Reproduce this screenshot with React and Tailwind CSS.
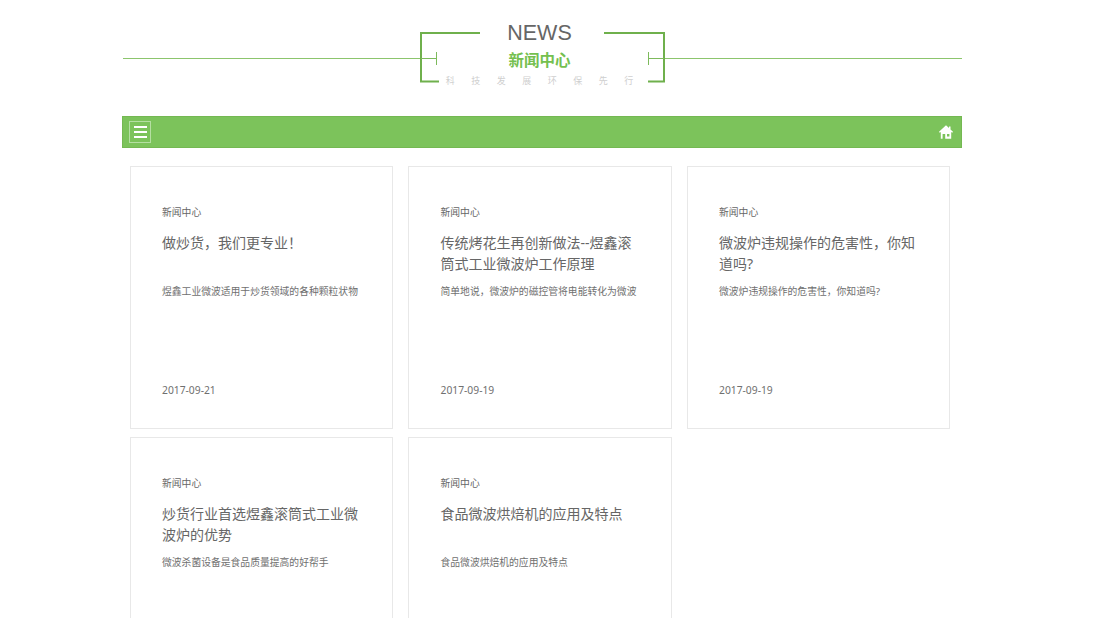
const cards = [
  { t: "做炒货，我们更专业！", d: "煜鑫工业微波适用于炒货领域的各种颗粒状物", date: "2017-09-21" },
  { t: "传统烤花生再创新做法--煜鑫滚筒式工业微波炉工作原理", d: "简单地说，微波炉的磁控管将电能转化为微波", date: "2017-09-19" },
  { t: "微波炉违规操作的危害性，你知道吗?", d: "微波炉违规操作的危害性，你知道吗?", date: "2017-09-19" },
  { t: "炒货行业首选煜鑫滚筒式工业微波炉的优势", d: "微波杀菌设备是食品质量提高的好帮手", date: "" },
  { t: "食品微波烘焙机的应用及特点", d: "食品微波烘焙机的应用及特点", date: "" },
];

const cjk = "font-['Noto_Sans','Noto_Sans_CJK_SC',sans-serif]";

function Card({ t, d, date }) {
  return (
    <div className="w-[263.5px] h-[263px] border border-[#e8e8e8] bg-white pt-[38px] pl-[31.5px] pr-[30.5px] flex flex-col">
      <div className="text-[9.8px] leading-[15px] text-[#666]">新闻中心</div>
      <div className="mt-[12px] h-[42px] text-[14px] leading-[21px] text-[#666]">{t}</div>
      <div className="mt-[10px] text-[9.8px] leading-[15px] text-[#707070] whitespace-nowrap">{d}</div>
      <div className="mt-[84px] text-[10.3px] leading-[15px] text-[#707070]">{date}</div>
    </div>
  );
}

export default function App() {
  return (
    <div className={`h-[618px] w-[1100px] overflow-hidden bg-white ${cjk}`}>
      <div className="relative h-[116px] w-[840px] ml-[122px]">
        <svg className="absolute left-0 top-0" width="842" height="116" fill="none">
          <path d="M1 58.5H314M542 58.5H840" stroke="#8cc56d" strokeWidth="1" />
          <path d="M358 33H299V81.500H317M482 33H542V81.500H526" stroke="#6fb04c" strokeWidth="2" />
          <path d="M299 58.500H314.500M314.500 52V65M526 58.500H542M526.500 52V65" stroke="#7dba5c" strokeWidth="1" />
        </svg>
        <div className="relative flex flex-col items-center w-[835px] pt-[20px]">
          <div className="font-['Liberation_Sans',sans-serif] text-[21.5px] leading-[26px] text-[#666]">NEWS</div>
          <div className="mt-[2px] text-[15.5px] leading-[24px] font-bold text-[#74c04f]">新闻中心</div>
          <div className="mt-[3px] flex gap-[16.5px] text-[9px] leading-[12px] text-[#cfcfcf]">
            {["科", "技", "发", "展", "环", "保", "先", "行"].map((c, i) => (
              <span key={i} className="w-[9px] text-center">{c}</span>
            ))}
          </div>
        </div>
      </div>

      <div className="ml-[122px] w-[840px] h-[32px] bg-[#7cc35b] border border-[#74b852] flex items-center justify-between pl-[6px] pr-[7px]">
        <div className="w-[22px] h-[22px] border border-[#b5dfa2] flex flex-col items-center justify-center gap-[3px]">
          <span className="block w-[13px] h-[2px] bg-white" />
          <span className="block w-[13px] h-[2px] bg-white" />
          <span className="block w-[13px] h-[2px] bg-white" />
        </div>
        <svg className="-translate-x-px" width="14" height="14" viewBox="0 0 14 14" fill="#fff" fillRule="evenodd">
          <path d="M7 0.300L0 6.800L0.700 7.800L1.800 6.900V13.800H12.200V6.900L13.300 7.800L14 6.800L11.500 4.500V1.500H10V3.100ZM3.600 9H6.200V13.800H3.600ZM8 9H10.400V11.500H8Z" />
        </svg>
      </div>

      <div className="ml-[129.500px] mt-[18px] grid grid-cols-[263.5px_263.5px_263.5px] gap-x-[15px] gap-y-[8px]">
        {cards.map((c, i) => <Card key={i} {...c} />)}
      </div>
    </div>
  );
}
